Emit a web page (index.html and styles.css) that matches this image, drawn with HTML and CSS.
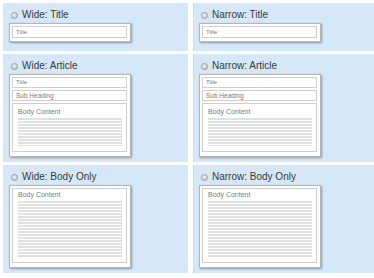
FILE: index.html
```html
<!DOCTYPE html>
<html lang="en">
<head>
  <meta charset="UTF-8">
  <title>Layout Options</title>
  <link rel="stylesheet" href="styles.css">
</head>
<body>
  <div class="layout-grid">
    <div class="panel">
      <label class="option"><span class="radio"></span>Wide: Title</label>
      <div class="mock">
        <div class="field">Title</div>
      </div>
    </div>
    <div class="panel right">
      <label class="option"><span class="radio"></span>Narrow: Title</label>
      <div class="mock">
        <div class="field">Title</div>
      </div>
    </div>

    <div class="panel">
      <label class="option"><span class="radio"></span>Wide: Article</label>
      <div class="mock tall">
        <div class="field">Title</div>
        <div class="field sub">Sub Heading</div>
        <div class="body-box">
          <div class="body-label">Body Content</div>
          <div class="lines"></div>
        </div>
      </div>
    </div>
    <div class="panel right">
      <label class="option"><span class="radio"></span>Narrow: Article</label>
      <div class="mock tall">
        <div class="field">Title</div>
        <div class="field sub">Sub Heading</div>
        <div class="body-box">
          <div class="body-label">Body Content</div>
          <div class="lines"></div>
        </div>
      </div>
    </div>

    <div class="panel">
      <label class="option"><span class="radio"></span>Wide: Body Only</label>
      <div class="mock tall">
        <div class="body-box only">
          <div class="body-label">Body Content</div>
          <div class="lines"></div>
        </div>
      </div>
    </div>
    <div class="panel right">
      <label class="option"><span class="radio"></span>Narrow: Body Only</label>
      <div class="mock tall">
        <div class="body-box only">
          <div class="body-label">Body Content</div>
          <div class="lines"></div>
        </div>
      </div>
    </div>
  </div>
</body>
</html>
```

FILE: styles.css
```css
* {
  box-sizing: border-box;
}

body {
  margin: 3px 0 0 3px;
  background: #fff;
  font-family: 'Liberation Sans', Arial, sans-serif;
  overflow: hidden;
}

.layout-grid {
  display: grid;
  grid-template-columns: 185px 1fr;
  grid-template-rows: 48px 108px 108px;
  gap: 3px 5px;
}

.panel {
  background: #d6e8f7;
  padding: 5px 6px 0;
}

.panel.right {
  padding-left: 5px;
  border-left: 1px solid #c8dcee;
}

.option {
  display: flex;
  align-items: center;
  gap: 4px;
  height: 14px;
  padding-left: 2px;
  font-size: 10px;
  line-height: 14px;
  color: #3a3a3a;
}

.radio {
  width: 7px;
  height: 7px;
  border-radius: 50%;
  border: 1px solid #9c9c9c;
  background: radial-gradient(circle at 40% 35%, #f2f2f2, #bdbdbd);
}

.mock {
  width: 122px;
  margin-top: 1px;
  padding: 2px 3px 3px 2px;
  display: flex;
  flex-direction: column;
  gap: 2px;
  background: #fff;
  border: 1px solid #b5b5b5;
  box-shadow: 1px 1px 2px rgba(0, 0, 0, 0.35);
}

.mock.tall {
  height: 83px;
  padding-bottom: 4px;
}

.field {
  height: 12px;
  padding-left: 3px;
  border: 1px solid #cfcfcf;
  font-size: 6px;
  line-height: 10px;
  color: #7a7a7a;
}

.mock.tall .field {
  height: 11px;
  line-height: 9px;
}

.field.sub {
  font-size: 6.5px;
}

.body-box {
  flex: 1;
  display: flex;
  flex-direction: column;
  padding: 3px 4px 3px 5px;
  border: 1px solid #cfcfcf;
}

.body-box.only {
  padding-top: 1px;
}

.body-label {
  font-size: 7px;
  line-height: 9px;
  color: #7a7a7a;
}

.lines {
  flex: 1;
  margin: 2px 0 2px;
  background: repeating-linear-gradient(#e0e0e0 0 2px, #fff 2px 3px);
}
```
